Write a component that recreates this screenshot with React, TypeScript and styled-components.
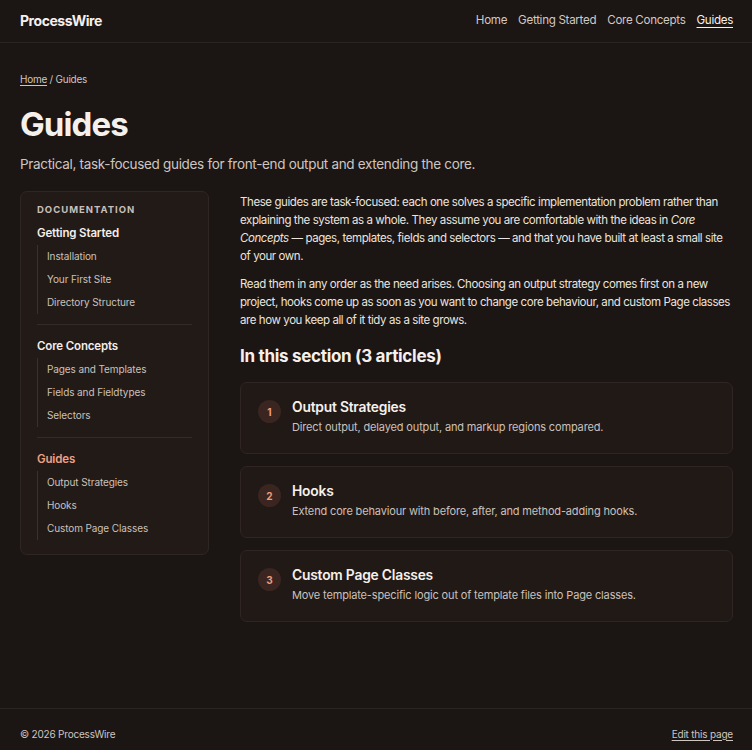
import React from "react";
import styled, { createGlobalStyle } from "styled-components";

const GlobalStyle = createGlobalStyle`
  html, body {
    margin: 0;
    padding: 0;
    background: #1b1513;
    color: #ece4df;
    font-family: Inter, "Noto Sans", "Liberation Sans", sans-serif;
  }
  * { box-sizing: border-box; }
  a { color: inherit; }
`;

const Page = styled.div`
  min-height: 100vh;
  display: flex;
  flex-direction: column;
`;

const Header = styled.header`
  height: 43px;
  border-bottom: 1px solid #2c2421;
  display: flex;
  align-items: center;
  justify-content: space-between;
  padding: 0 19px 2px 20px;
`;

const Logo = styled.div`
  font-size: 14px;
  font-weight: 700;
  color: #f6f0ec;
  letter-spacing: -0.45px;
`;

const Nav = styled.nav`
  display: flex;
  gap: 11px;
`;

const NavLink = styled.a<{ $active?: boolean }>`
  font-size: 11.6px;
  letter-spacing: -0.3px;
  text-decoration: ${(p) => (p.$active ? "underline" : "none")};
  text-underline-offset: 3px;
  color: ${(p) => (p.$active ? "#f6f0ec" : "#d2c8c3")};
`;

const Main = styled.main`
  flex: 1;
  padding: 30px 19px 60px 20px;
`;

const Breadcrumb = styled.div`
  font-size: 10px;
  letter-spacing: -0.25px;
  color: #cfc5c0;
  a { text-decoration: underline; text-underline-offset: 2px; }
`;

const Title = styled.h1`
  margin: 17px 0 0;
  font-size: 33px;
  font-weight: 700;
  letter-spacing: -0.9px;
  line-height: 44px;
  color: #f6f0ec;
`;

const Lead = styled.p`
  margin: 10px 0 0;
  font-size: 13.5px;
  letter-spacing: -0.32px;
  color: #cfc5c0;
`;

const Columns = styled.div`
  margin-top: 19px;
  display: grid;
  grid-template-columns: 189px 1fr;
  gap: 31px;
  align-items: start;
`;

const Sidebar = styled.aside`
  background: #211a17;
  border: 1px solid #2f2623;
  border-radius: 7px;
  padding: 12px 16px 14px 16px;
`;

const SideLabel = styled.div`
  font-size: 9.5px;
  font-weight: 700;
  letter-spacing: 1px;
  color: #c9bfba;
  text-transform: uppercase;
`;

const Group = styled.div`
  padding: 11px 0 0;
  & + & {
    border-top: 1px solid #342b27;
    margin-top: 10px;
    padding-top: 14px;
  }
`;

const GroupTitle = styled.div<{ $active?: boolean }>`
  font-size: 11.5px;
  font-weight: 600;
  letter-spacing: -0.15px;
  color: ${(p) => (p.$active ? "#f0a082" : "#f4ede9")};
`;

const SubList = styled.ul`
  list-style: none;
  margin: 5px 0 0;
  padding: 0 0 0 9px;
  border-left: 1px solid #3a302c;
`;

const SubItem = styled.li`
  font-size: 10px;
  letter-spacing: -0.1px;
  color: #cbc1bc;
  height: 23px;
  line-height: 23px;
`;

const Content = styled.div`
  padding-top: 2px;
`;

const Para = styled.p`
  margin: 0 0 10px;
  font-size: 11.5px;
  letter-spacing: -0.42px;
  line-height: 18px;
  color: #ece4df;
`;

const SectionTitle = styled.h2`
  margin: 17px 0 16px;
  font-size: 17px;
  font-weight: 700;
  letter-spacing: -0.3px;
  color: #f6f0ec;
`;

const Cards = styled.div`
  display: flex;
  flex-direction: column;
  gap: 12px;
`;

const Card = styled.a`
  display: flex;
  align-items: flex-start;
  gap: 11px;
  height: 72px;
  padding: 16px 17px;
  background: #211916;
  border: 1px solid #2f2623;
  border-radius: 7px;
  text-decoration: none;
`;

const Num = styled.span`
  flex: none;
  width: 23px;
  height: 23px;
  margin-top: 1px;
  border-radius: 50%;
  background: #3a2520;
  color: #ee9c7c;
  font-size: 10px;
  font-weight: 700;
  display: flex;
  align-items: center;
  justify-content: center;
`;

const CardBody = styled.div`
  display: flex;
  flex-direction: column;
  gap: 5px;
`;

const CardTitle = styled.div`
  font-size: 13.8px;
  font-weight: 600;
  letter-spacing: -0.2px;
  color: #f6f0ec;
`;

const CardDesc = styled.div`
  font-size: 11px;
  letter-spacing: -0.15px;
  color: #cbc1bc;
`;

const Footer = styled.footer`
  border-top: 1px solid #2c2421;
  height: 42px;
  display: flex;
  align-items: center;
  justify-content: space-between;
  padding: 8px 19px 0 20px;
  font-size: 10px;
  letter-spacing: -0.2px;
  color: #cfc5c0;
  a { text-decoration: underline; text-underline-offset: 2px; }
`;

const groups = [
  { title: "Getting Started", items: ["Installation", "Your First Site", "Directory Structure"] },
  { title: "Core Concepts", items: ["Pages and Templates", "Fields and Fieldtypes", "Selectors"] },
  { title: "Guides", active: true, items: ["Output Strategies", "Hooks", "Custom Page Classes"] },
];

const articles = [
  { title: "Output Strategies", desc: "Direct output, delayed output, and markup regions compared." },
  { title: "Hooks", desc: "Extend core behaviour with before, after, and method-adding hooks." },
  { title: "Custom Page Classes", desc: "Move template-specific logic out of template files into Page classes." },
];

export default function App() {
  return (
    <Page>
      <GlobalStyle />
      <Header>
        <Logo>ProcessWire</Logo>
        <Nav>
          <NavLink href="#">Home</NavLink>
          <NavLink href="#">Getting Started</NavLink>
          <NavLink href="#">Core Concepts</NavLink>
          <NavLink href="#" $active>Guides</NavLink>
        </Nav>
      </Header>
      <Main>
        <Breadcrumb>
          <a href="#">Home</a> / Guides
        </Breadcrumb>
        <Title>Guides</Title>
        <Lead>Practical, task-focused guides for front-end output and extending the core.</Lead>
        <Columns>
          <Sidebar>
            <SideLabel>Documentation</SideLabel>
            {groups.map((g) => (
              <Group key={g.title}>
                <GroupTitle $active={g.active}>{g.title}</GroupTitle>
                <SubList>
                  {g.items.map((i) => (
                    <SubItem key={i}>{i}</SubItem>
                  ))}
                </SubList>
              </Group>
            ))}
          </Sidebar>
          <Content>
            <Para>
              These guides are task-focused: each one solves a specific implementation problem rather than
              explaining the system as a whole. They assume you are comfortable with the ideas in{" "}
              <em>Core Concepts</em> — pages, templates, fields and selectors — and that you have built at
              least a small site of your own.
            </Para>
            <Para>
              Read them in any order as the need arises. Choosing an output strategy comes first on a new
              project, hooks come up as soon as you want to change core behaviour, and custom Page classes
              are how you keep all of it tidy as a site grows.
            </Para>
            <SectionTitle>In this section (3 articles)</SectionTitle>
            <Cards>
              {articles.map((a, i) => (
                <Card href="#" key={a.title}>
                  <Num>{i + 1}</Num>
                  <CardBody>
                    <CardTitle>{a.title}</CardTitle>
                    <CardDesc>{a.desc}</CardDesc>
                  </CardBody>
                </Card>
              ))}
            </Cards>
          </Content>
        </Columns>
      </Main>
      <Footer>
        <span>© 2026 ProcessWire</span>
        <a href="#">Edit this page</a>
      </Footer>
    </Page>
  );
}
